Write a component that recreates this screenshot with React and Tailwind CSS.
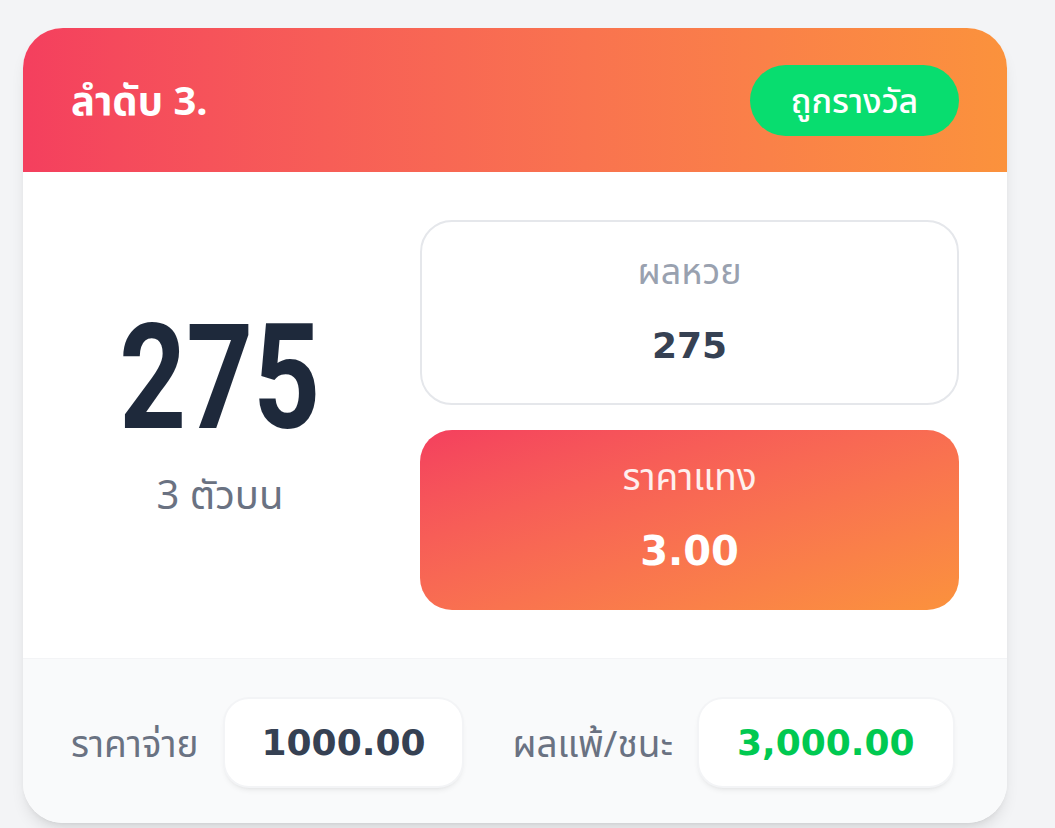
import React from "react";

const thai = { fontFamily: '"Noto Sans", "Noto Sans Thai", Roboto, sans-serif' };
const num = { fontFamily: '"DejaVu Sans", "Noto Sans", sans-serif' };

export default function App() {
  return (
    <div className="min-h-screen bg-gray-100 pl-[23px] pt-[28px]" style={thai}>
      <div className="w-[984px] overflow-hidden rounded-[40px] bg-white shadow-lg">
        {/* Header */}
        <div className="flex h-[144px] items-center justify-between bg-gradient-to-r from-[#f43f5e] to-[#fb923c] px-12">
          <h2 className="text-[40px] font-bold text-white">ลำดับ 3.</h2>
          <span className="flex h-[71px] w-[209px] items-center justify-center rounded-full bg-[#08dd6f] text-[34px] font-medium text-white">
            ถูกรางวัล
          </span>
        </div>

        {/* Body */}
        <div className="flex items-center gap-[51px] px-12 py-12">
          <div className="flex w-[298px] flex-col items-center">
            <div
              className="origin-center scale-x-[0.8] text-[146px] font-bold leading-none text-[#1e293b]"
              style={{ fontFamily: "Roboto, sans-serif" }}
            >
              275
            </div>
            <div className="mt-3 text-[40px] text-gray-500">3 ตัวบน</div>
          </div>

          <div className="flex flex-1 flex-col gap-[25px]">
            <div className="flex h-[185px] flex-col items-center justify-center gap-[39px] rounded-[32px] border-2 border-gray-200 bg-white pb-[9px]">
              <div className="text-[36px] leading-none text-gray-400">ผลหวย</div>
              <div className="text-[36px] font-bold leading-none text-gray-700" style={num}>
                275
              </div>
            </div>
            <div className="flex h-[180px] flex-col items-center justify-center gap-[37px] rounded-[32px] bg-gradient-to-br from-[#f43f5e] to-[#fb923c] pb-[13px]">
              <div className="text-[37px] leading-none text-white/90">ราคาแทง</div>
              <div className="text-[40px] font-bold leading-none text-white" style={num}>
                3.00
              </div>
            </div>
          </div>
        </div>

        {/* Footer */}
        <div className="flex items-center gap-[50px] border-t border-gray-100 bg-gray-50 px-12 pb-[37px] pt-[40px]">
          <div className="flex items-center gap-[26px]">
            <span className="whitespace-nowrap text-[37px] text-gray-500">ราคาจ่าย</span>
            <div
              className="flex h-[87px] shrink-0 items-center rounded-3xl bg-white px-[37px] text-[36px] font-bold text-gray-700 shadow-md ring-2 ring-gray-100"
              style={num}
            >
              1000.00
            </div>
          </div>
          <div className="flex items-center gap-[26px]">
            <span className="whitespace-nowrap text-[37px] text-gray-500">ผลแพ้/ชนะ</span>
            <div
              className="flex h-[87px] shrink-0 items-center rounded-3xl bg-white px-[38px] text-[36px] font-bold text-[#00c951] shadow-md ring-2 ring-gray-100"
              style={num}
            >
              3,000.00
            </div>
          </div>
        </div>
      </div>
    </div>
  );
}
